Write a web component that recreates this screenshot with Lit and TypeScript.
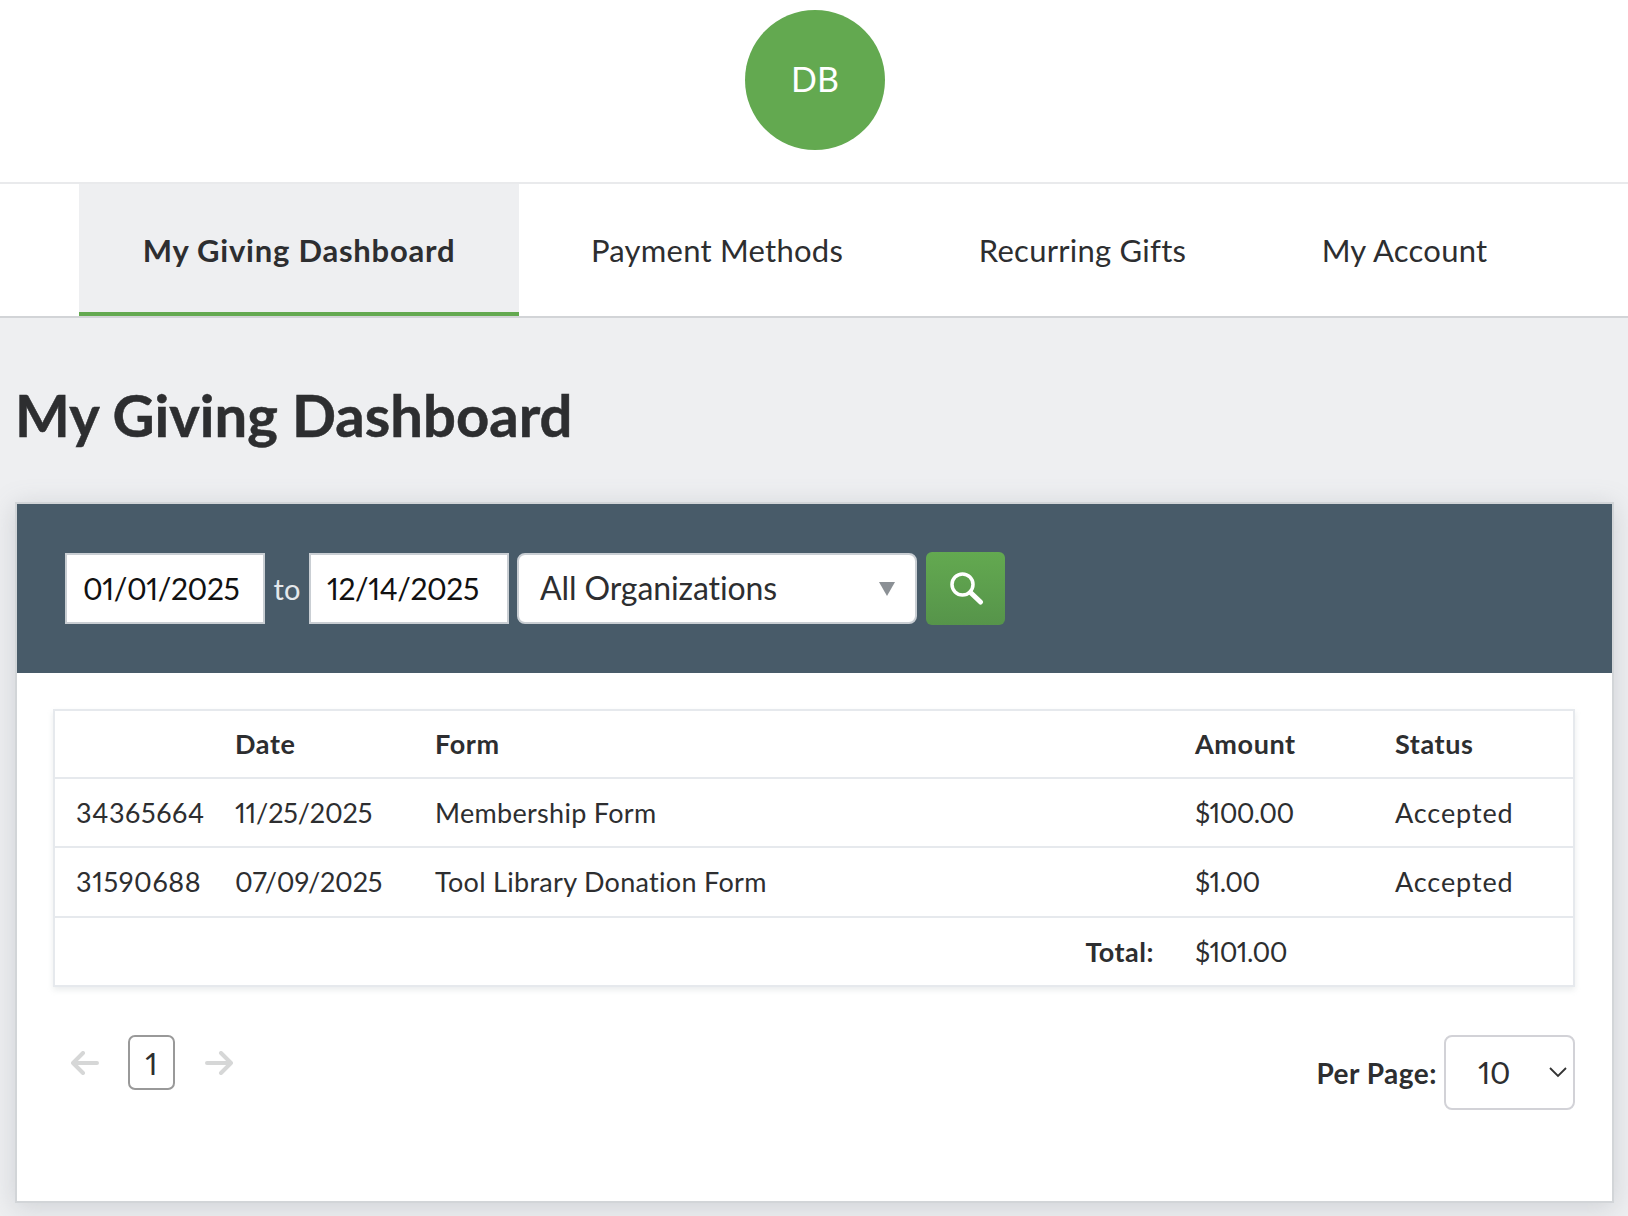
import { LitElement, html, css, svg } from "lit";
import { customElement } from "lit/decorators.js";

const rows = [
  ["34365664", "11/25/2025", "Membership Form", "$100.00", "Accepted"],
  ["31590688", "07/09/2025", "Tool Library Donation Form", "$1.00", "Accepted"],
];

@customElement("app-root")
export class AppRoot extends LitElement {
  static styles = css`
    :host {
      display: block;
      min-height: 1216px;
      background: #eeeff1;
      font-family: "Lato", "Liberation Sans", sans-serif;
      font-variant-numeric: proportional-nums;
      color: #2d2e30;
      overflow: hidden;
    }
    .top {
      height: 182px;
      background: #fff;
      border-bottom: 2px solid #e9eaec;
      display: flex;
      justify-content: center;
      align-items: flex-start;
    }
    .avatar {
      box-sizing: border-box;
      margin-top: 10px;
      width: 140px;
      height: 140px;
      border-radius: 50%;
      background: #63a950;
      color: #fff;
      font-size: 34px;
      font-weight: 400;
      display: flex;
      align-items: center;
      justify-content: center;
      margin-left: 2px;
      padding-bottom: 3px;
    }
    .nav {
      height: 132px;
      background: #fff;
      border-bottom: 2px solid #d2d4d7;
      display: grid;
      grid-template-columns: 440px 396px 335px 309px;
      padding-left: 79px;
    }
    .tab {
      display: flex;
      align-items: center;
      justify-content: center;
      font-size: 31px;
      letter-spacing: 0.25px;
      box-sizing: border-box;
      border-bottom: 4px solid transparent;
      padding-top: 4px;
    }
    .tab.active {
      background: #eeeff1;
      border-bottom-color: #63a950;
      font-weight: 700;
      letter-spacing: 0.77px;
    }
    h1 {
      margin: 67px 0 57px 15px;
      font-size: 58px;
      line-height: 60px;
      font-weight: 700;
      -webkit-text-stroke: 0.5px #2d2e30;
    }
    .card {
      margin: 0 14px 14px 15px;
      border: 2px solid #d2d5d8;
      background: #fff;
      box-shadow: 0 4px 24px rgba(110, 120, 130, 0.25);
    }
    .filter {
      height: 169px;
      background: #485b69;
      display: flex;
      align-items: center;
      padding-left: 48px;
    }
    .field {
      box-sizing: border-box;
      height: 71px;
      background: #fff;
      border: 2px solid #c9ced3;
      display: flex;
      align-items: center;
      font-size: 32px;
    }
    .date {
      width: 200px;
      padding: 0 0 2px 16px;
      color: #111;
      font-size: 30px;
      letter-spacing: -0.4px;
    }
    .to {
      width: 44px;
      text-align: center;
      color: #e4e8eb;
      font-size: 29px;
    }
    .org {
      width: 400px;
      margin-left: 8px;
      padding: 0 20px 2px 21px;
      border-radius: 8px;
      justify-content: space-between;
      color: #2d2e30;
      letter-spacing: -0.1px;
    }
    .caret {
      width: 0;
      height: 0;
      margin-top: 2px;
      border-left: 8px solid transparent;
      border-right: 8px solid transparent;
      border-top: 14px solid #8b9095;
    }
    .go {
      width: 79px;
      height: 73px;
      margin-left: 9px;
      border-radius: 6px;
      background: linear-gradient(#63a950, #56944a);
      display: flex;
      align-items: center;
      justify-content: center;
    }
    .body {
      padding: 36px 37px 91px 36px;
    }
    table {
      width: 100%;
      table-layout: fixed;
      border-collapse: collapse;
      border: 2px solid #e6e9ed;
      box-shadow: 0 3px 6px rgba(150, 158, 165, 0.2);
      font-size: 27px;
    }
    th,
    td {
      text-align: left;
      padding: 0;
      height: 67px;
      border-bottom: 2px solid #e6e9ed;
      letter-spacing: 0.3px;
    }
    tbody tr:nth-child(2) td {
      padding-bottom: 1px;
    }
    th {
      font-weight: 700;
      height: 65px;
      padding-bottom: 1px;
      letter-spacing: 0.6px;
    }
    .c1 {
      width: 181px;
      padding-left: 21px;
      box-sizing: border-box;
    }
    .c2 {
      width: 200px;
    }
    .c3 {
      width: 760px;
    }
    .c4 {
      width: 200px;
    }
    td.id {
      letter-spacing: 0.6px;
    }
    td.dt {
      letter-spacing: -0.15px;
    }
    td.amt {
      letter-spacing: -0.6px;
    }
    td.st {
      letter-spacing: 0.9px;
    }
    td.total {
      text-align: right;
      font-weight: 700;
      padding-right: 41px;
      letter-spacing: 0.5px;
    }
    tr:last-child td {
      border-bottom: 0;
    }
    .foot {
      display: flex;
      justify-content: space-between;
      align-items: flex-start;
      margin-top: 48px;
    }
    .pager {
      display: flex;
      align-items: center;
      height: 55px;
      padding-left: 18px;
    }
    .page {
      box-sizing: border-box;
      width: 47px;
      height: 55px;
      margin: 0 30px 0 29px;
      border: 2px solid #999;
      border-radius: 7px;
      font-size: 31px;
      display: flex;
      align-items: center;
      justify-content: center;
    }
    .per {
      display: flex;
      align-items: center;
      gap: 7px;
      font-size: 28px;
      font-weight: 700;
      letter-spacing: 0.5px;
    }
    .persel {
      box-sizing: border-box;
      width: 131px;
      height: 75px;
      border: 2px solid #d2d2d7;
      border-radius: 8px;
      display: flex;
      align-items: center;
      justify-content: space-between;
      padding: 0 6px 2px 32px;
      font-size: 31px;
      font-weight: 400;
      letter-spacing: -0.3px;
    }
  `;

  private arrow(dir: "l" | "r") {
    const d = dir === "l" ? "M26 12H2M12 2L2 12l10 10" : "M2 12h24M16 2l10 10-10 10";
    return html`<svg width="28" height="24" viewBox="0 0 28 24" fill="none" stroke="#d6d7d7" stroke-width="4" stroke-linecap="round" stroke-linejoin="round">${svg`<path d=${d}></path>`}</svg>`;
  }

  render() {
    return html`
      <div class="top"><div class="avatar">DB</div></div>
      <nav class="nav">
        <div class="tab active">My Giving Dashboard</div>
        <div class="tab">Payment Methods</div>
        <div class="tab">Recurring Gifts</div>
        <div class="tab">My Account</div>
      </nav>
      <h1>My Giving Dashboard</h1>
      <section class="card">
        <div class="filter">
          <div class="field date">01/01/2025</div>
          <div class="to">to</div>
          <div class="field date">12/14/2025</div>
          <div class="field org">All Organizations<span class="caret"></span></div>
          <div class="go">
            <svg width="36" height="36" viewBox="0 0 36 36" fill="none" stroke="#fff" stroke-linecap="round">
              <circle cx="14.5" cy="13.5" r="10.5" stroke-width="3.5"></circle>
              <path d="M22.5 21.5l10 9.5" stroke-width="5"></path>
            </svg>
          </div>
        </div>
        <div class="body">
          <table>
            <colgroup>
              <col class="c1" /><col class="c2" /><col class="c3" /><col class="c4" /><col />
            </colgroup>
            <thead>
              <tr><th class="c1"></th><th>Date</th><th>Form</th><th>Amount</th><th>Status</th></tr>
            </thead>
            <tbody>
              ${rows.map(
                (r) => html`<tr><td class="c1 id">${r[0]}</td><td class="dt">${r[1]}</td><td>${r[2]}</td><td class="amt">${r[3]}</td><td class="st">${r[4]}</td></tr>`
              )}
              <tr><td colspan="3" class="total">Total:</td><td class="amt">$101.00</td><td></td></tr>
            </tbody>
          </table>
          <div class="foot">
            <div class="pager">
              ${this.arrow("l")}
              <div class="page">1</div>
              ${this.arrow("r")}
            </div>
            <div class="per">
              <span>Per Page:</span>
              <div class="persel">
                10
                <svg width="18" height="12" viewBox="0 0 18 12" fill="none" stroke="#333" stroke-width="1.8"><path d="M1 2l8 8 8-8"></path></svg>
              </div>
            </div>
          </div>
        </div>
      </section>
    `;
  }
}
